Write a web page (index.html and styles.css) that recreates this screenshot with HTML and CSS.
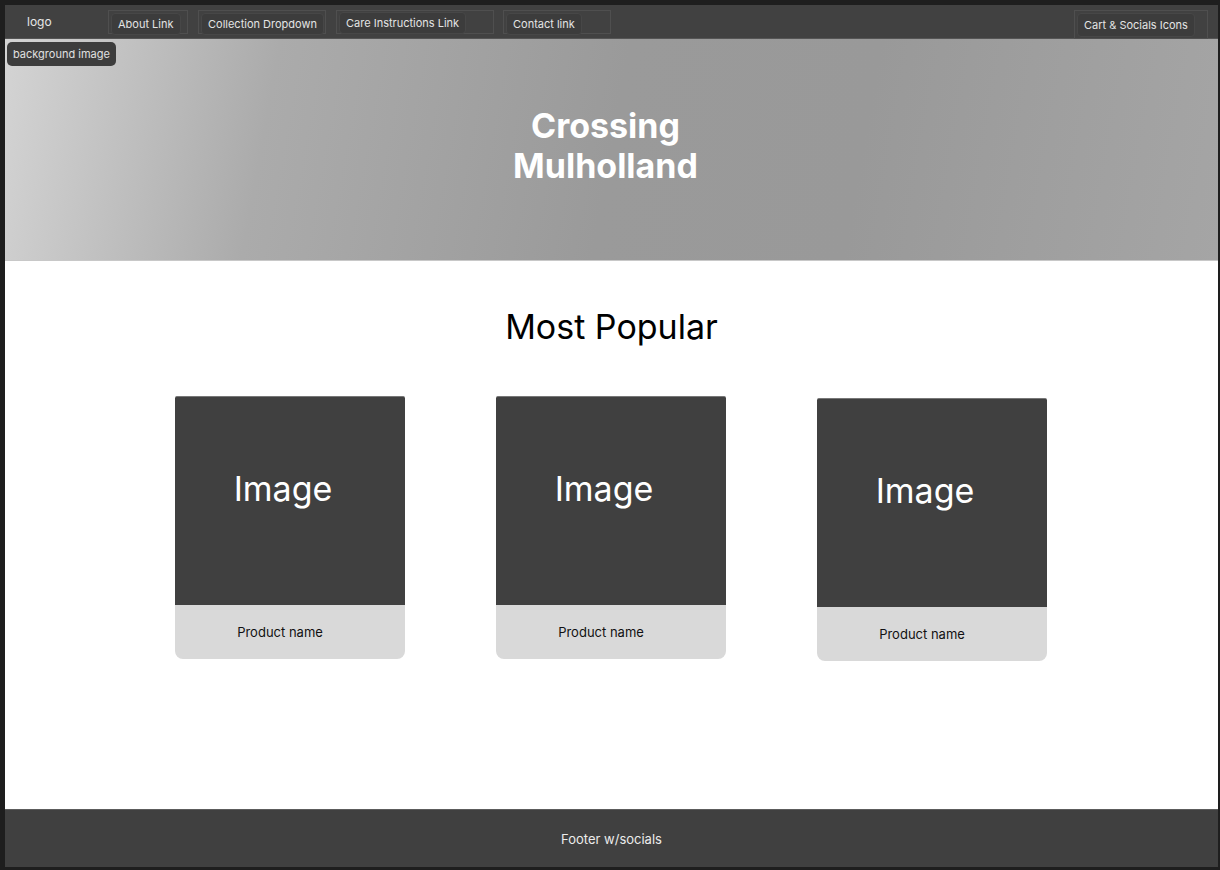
FILE: index.html
```html
<!DOCTYPE html>
<html lang="en">
<head>
<meta charset="utf-8">
<title>Crossing Mulholland</title>
<link rel="stylesheet" href="styles.css">
</head>
<body>
<div class="frame">
  <nav class="nav">
    <div class="logo">logo</div>
    <div class="box box-about"><span class="pill">About Link</span></div>
    <div class="box box-collection"><span class="pill">Collection Dropdown</span></div>
    <div class="box box-care"><span class="pill pill-high">Care Instructions Link</span></div>
    <div class="box box-contact"><span class="pill">Contact link</span></div>
    <div class="box box-cart"><span class="pill">Cart &amp; Socials Icons</span></div>
  </nav>
  <header class="hero">
    <span class="hero-label">background image</span>
    <h1 class="hero-title">Crossing<br>Mulholland</h1>
  </header>
  <main class="main">
    <h2 class="section-title">Most Popular</h2>
    <div class="cards">
      <div class="card">
        <div class="card-image">Image</div>
        <div class="card-name">Product name</div>
      </div>
      <div class="card">
        <div class="card-image">Image</div>
        <div class="card-name">Product name</div>
      </div>
      <div class="card card-low">
        <div class="card-image">Image</div>
        <div class="card-name">Product name</div>
      </div>
    </div>
  </main>
  <footer class="footer">Footer w/socials</footer>
</div>
</body>
</html>
```

FILE: styles.css
```css
* { box-sizing: border-box; }
html, body { margin: 0; padding: 0; }
body {
  background: #1e1e1e;
  font-family: Inter, "Noto Sans", "Liberation Sans", sans-serif;
  width: 1220px;
  height: 870px;
  overflow: hidden;
}
.frame {
  width: 1213px;
  margin: 5px 0 0 5px;
  display: flex;
  flex-direction: column;
}
.nav {
  height: 34px;
  background: #414141;
  border-bottom: 1px solid #555;
  display: flex;
  align-items: flex-start;
  padding-left: 22px;
  padding-right: 10px;
}
.logo {
  width: 81px;
  color: #e6e6e6;
  font-size: 12px;
  line-height: 14px;
  margin-top: 10px;
}
.box {
  height: 24px;
  margin-top: 5px;
  border: 1px solid #4f4f4f;
  margin-right: 10px;
}
.box-about { width: 80px; }
.box-collection { width: 128px; }
.box-care { width: 158px; margin-right: 9px; }
.box-contact { width: 108px; }
.box-cart { width: 134px; height: 29px; margin-left: auto; margin-right: 0; }
.pill {
  display: inline-flex;
  align-items: center;
  height: 22px;
  margin: 2px 0 0 2px;
  padding: 0 6px;
  background: #3c3c3c;
  border: 1px solid #474747;
  border-radius: 4px;
  color: #e4e4e4;
  font-size: 11px;
  white-space: nowrap;
}
.pill-high { margin-top: 1px; }
.box-cart .pill { height: 24px; }
.hero {
  position: relative;
  height: 222px;
  background: linear-gradient(100deg, #d4d4d4 0%, #ababab 22%, #9a9a9a 50%, #999999 70%, #a5a5a5 100%);
  border-bottom: 1px solid #c8c8c8;
  display: flex;
  align-items: center;
  justify-content: center;
  padding: 0 12px 8px 0;
}
.hero-label {
  position: absolute;
  top: 3px;
  left: 2px;
  height: 24px;
  padding: 0 6px;
  display: inline-flex;
  align-items: center;
  background: #3d3d3d;
  border-radius: 5px;
  color: #e0e0e0;
  font-size: 11px;
}
.hero-title {
  margin: 0;
  color: #fff;
  font-size: 34px;
  font-weight: 700;
  line-height: 40px;
  text-align: center;
}
.main {
  height: 548px;
  background: #fff;
  display: flex;
  flex-direction: column;
  align-items: center;
}
.section-title {
  margin: 46px 0 0;
  font-size: 34px;
  font-weight: 400;
  line-height: 40px;
  color: #000;
}
.cards {
  display: flex;
  align-items: flex-start;
  gap: 91px;
  margin-top: 49px;
  padding-right: 1px;
}
.card {
  width: 230px;
  display: flex;
  flex-direction: column;
}
.card-low { margin-top: 2px; }
.card-image {
  height: 209px;
  background: #404040;
  border-top: 1px solid #777;
  border-radius: 2px 2px 0 0;
  display: flex;
  align-items: center;
  justify-content: center;
  padding: 0 14px 25px 0;
  color: #fff;
  font-size: 34px;
  font-weight: 400;
}
.card-name {
  height: 54px;
  background: #d9d9d9;
  border-radius: 0 0 8px 8px;
  display: flex;
  align-items: center;
  justify-content: center;
  padding-right: 20px;
  color: #111;
  font-size: 13px;
}
.footer {
  height: 58px;
  background: #404040;
  border-top: 1px solid #5c5c5c;
  display: flex;
  align-items: center;
  justify-content: center;
  color: #ececec;
  font-size: 13px;
}
```
